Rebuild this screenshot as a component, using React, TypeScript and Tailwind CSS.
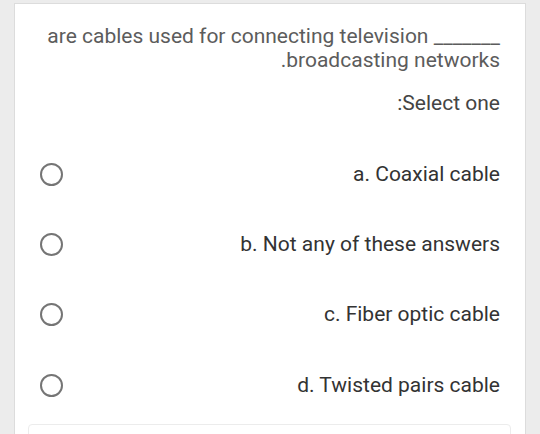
import React from 'react';

const options = [
  'a. Coaxial cable',
  'b. Not any of these answers',
  'c. Fiber optic cable',
  'd. Twisted pairs cable',
];

export default function App() {
  return (
    <div
      className="min-h-[434px] w-full bg-[#ececec] pt-[3px] overflow-hidden"
      style={{ fontFamily: 'Roboto, "Noto Sans", sans-serif' }}
    >
      <div
        dir="rtl"
        className="mx-[14px] bg-white border-t border-x border-[#dcdcdc] h-[440px] pt-[20px] pl-[26px] pr-[25px]"
      >
        <p className="text-right text-[21px] leading-[24px] text-[#5c5c5c]">
          _______ are cables used for connecting television broadcasting networks.
        </p>
        <p className="mt-[19px] text-right text-[21px] leading-[24px] text-[#444]">
          Select one:
        </p>

        <div className="mt-[24px] flex flex-col">
          {options.map((opt) => (
            <div key={opt} className="flex h-[70.3px] items-center justify-between">
              <span className="text-[21px] leading-[25px] text-[#333]">{opt}</span>
              <span className="block h-[23px] w-[23px] rounded-full border-[2.5px] border-[#757575] -ml-[1px]" />
            </div>
          ))}
        </div>

        <div className="mt-[4px] -mr-[11px] -ml-[13px] h-[40px] rounded-sm border border-[#ececec] bg-white" />
      </div>
    </div>
  );
}
